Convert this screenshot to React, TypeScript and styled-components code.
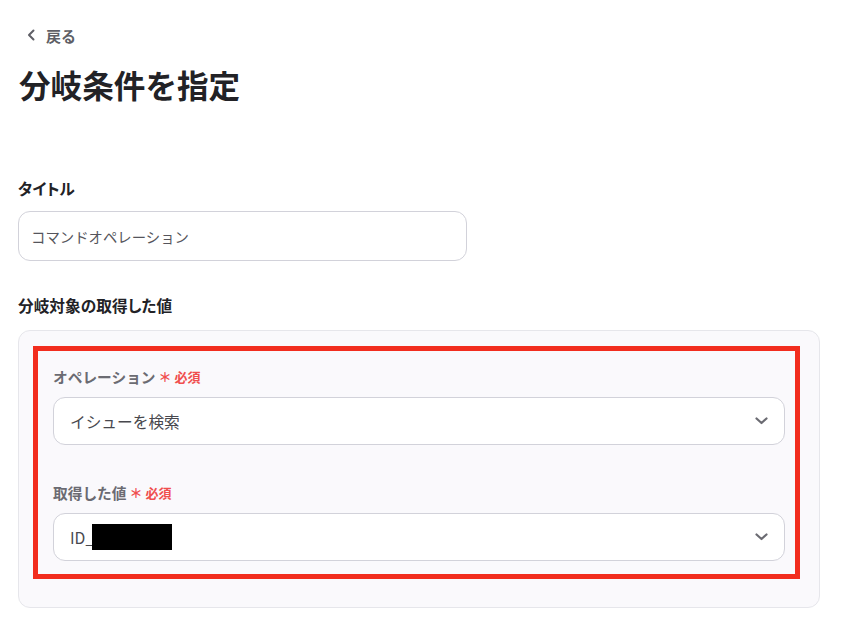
import React from 'react'
import styled, { createGlobalStyle } from 'styled-components'

const GlobalStyle = createGlobalStyle`
    body {
        margin: 0;
        background: #ffffff;
        font-family: "Noto Sans CJK JP", "Noto Sans", sans-serif;
    }
`

const Page = styled.div`
    padding: 23px 0 0 18px;
    width: 802px;
`

const BackLink = styled.a`
    display: flex;
    align-items: center;
    gap: 10px;
    height: 24px;
    padding-left: 8px;
    color: #5f5f66;
    font-size: 15px;
    font-weight: 700;
    text-decoration: none;
`

const Title = styled.h1`
    margin: 17px 0 0 1px;
    font-size: 31.6px;
    line-height: 40px;
    font-weight: 700;
    color: #222226;
`

const Label = styled.div`
    margin: ${p => p.$top || 0}px 0 0 0;
    font-size: 15.7px;
    line-height: 20px;
    font-weight: 700;
    color: #222226;
    font-feature-settings: "palt";
`

const TextInput = styled.div`
    margin-top: 12px;
    width: 449px;
    height: 50px;
    box-sizing: border-box;
    border: 1px solid #d2d2da;
    border-radius: 12px;
    background: #fff;
    display: flex;
    align-items: center;
    padding-left: 12px;
    font-size: 14.4px;
    color: #55555c;
`

const Panel = styled.div`
    margin-top: 14px;
    box-sizing: border-box;
    width: 802px;
    height: 278px;
    border: 1px solid #e6e6eb;
    border-radius: 12px;
    background: #faf9fc;
    padding: 15px 19px 0 14px;
`

const Highlight = styled.div`
    box-sizing: border-box;
    height: 233px;
    border: 5px solid #f22d1e;
    padding: 16px 10px 0 15px;
`

const FieldLabel = styled.div`
    display: flex;
    align-items: center;
    gap: 3px;
    margin-top: ${p => p.$top || 0}px;
    font-size: 14.7px;
    line-height: 20px;
    font-weight: 700;
    color: #6b6b72;
`

const Required = styled.span`
    color: #f04e4e;
    font-size: 13px;
    font-weight: 700;
`

const Select = styled.div`
    margin-top: 10px;
    height: 48px;
    box-sizing: border-box;
    border: 1px solid #d2d2da;
    border-radius: 12px;
    background: #fff;
    display: flex;
    align-items: center;
    justify-content: space-between;
    padding: 0 16px 0 16px;
    font-size: 15.7px;
    color: #48484e;
`

const Value = styled.span`
    display: flex;
    align-items: center;
`

const Redacted = styled.span`
    display: inline-block;
    width: 80px;
    height: 26px;
    background: #000;
    margin-left: -2px;
`

const Chevron = () => (
    <svg width="13" height="8" viewBox="0 0 13 8">
        <path d="M1.5 1.5 L6.5 6 L11.5 1.5" fill="none" stroke="#6b6b72" strokeWidth="2.2" strokeLinecap="round" strokeLinejoin="round" />
    </svg>
)

export default function App() {
    return (
        <Page>
            <GlobalStyle />
            <BackLink href="#">
                <svg width="10" height="12" viewBox="0 0 10 12">
                    <path d="M7.5 1.5 L3 6 L7.5 10.5" fill="none" stroke="#5f5f66" strokeWidth="2" strokeLinecap="round" strokeLinejoin="round" />
                </svg>
                戻る
            </BackLink>
            <Title>分岐条件を指定</Title>
            <Label $top={75}>タイトル</Label>
            <TextInput>コマンドオペレーション</TextInput>
            <Label $top={35}>分岐対象の取得した値</Label>
            <Panel>
                <Highlight>
                    <FieldLabel>
                        オペレーション<Required>＊ 必須</Required>
                    </FieldLabel>
                    <Select>
                        <Value>イシューを検索</Value>
                        <Chevron />
                    </Select>
                    <FieldLabel $top={38}>
                        取得した値<Required>＊ 必須</Required>
                    </FieldLabel>
                    <Select>
                        <Value>ID_<Redacted /></Value>
                        <Chevron />
                    </Select>
                </Highlight>
            </Panel>
        </Page>
    )
}
